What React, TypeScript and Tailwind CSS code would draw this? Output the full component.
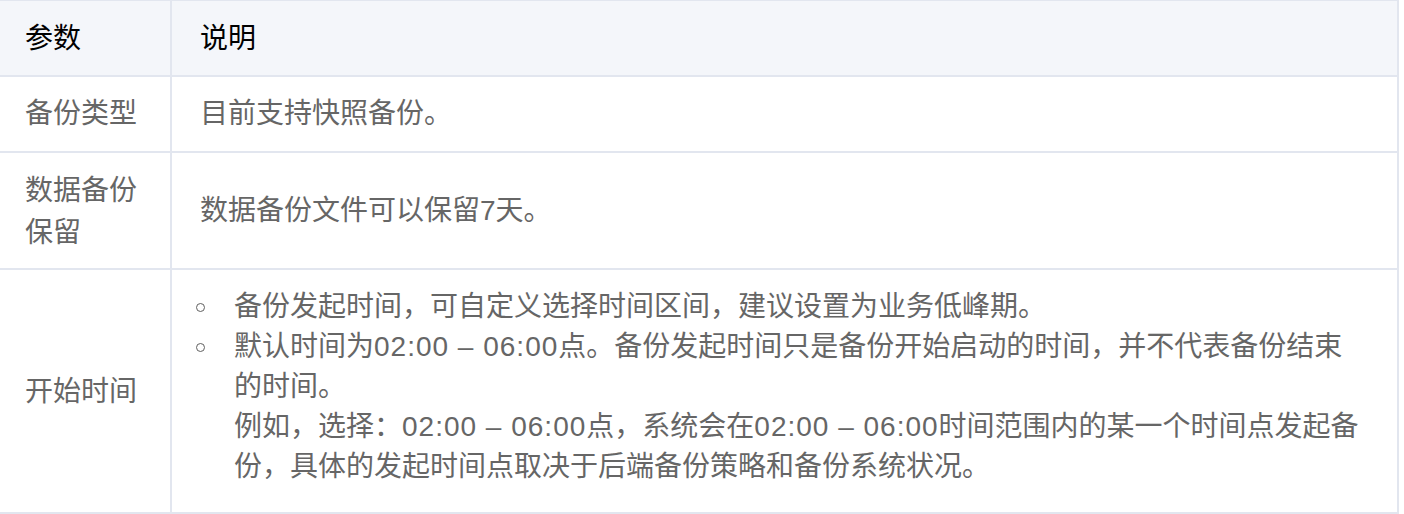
import React from "react";

const Bullet = () => (
  <span className="flex w-[34px] shrink-0 items-center h-[40px]">
    <span className="ml-[-4px] block h-[9px] w-[9px] rounded-full border-[1.5px] border-[#5f5f5f]" />
  </span>
);

const Range = () => <span className="tracking-[1px]">02:00 – 06:00</span>;

export default function App() {
  return (
    <div
      className="w-[1404px] h-[514px] bg-white text-[28px] leading-[40px] text-[#666666]"
      style={{ fontFamily: '"Liberation Sans", "Noto Sans CJK SC", sans-serif' }}
    >
      <div className="w-[1399px] border-t border-r-2 border-b-2 border-[#e2e6ef]">
        {/* header */}
        <div className="grid grid-cols-[172px_1fr] bg-[#f4f6fa] text-black border-b-2 border-[#e2e6ef]">
          <div className="h-[74px] flex items-center pl-[25px] pt-[2px] border-r-2 border-[#e2e6ef]">参数</div>
          <div className="h-[74px] flex items-center pl-[28px] pt-[2px]">说明</div>
        </div>
        {/* row 1 */}
        <div className="grid grid-cols-[172px_1fr] border-b-2 border-[#e2e6ef]">
          <div className="h-[74px] flex items-center pl-[25px] border-r-2 border-[#e2e6ef]">备份类型</div>
          <div className="h-[74px] flex items-center pl-[28px]">目前支持快照备份。</div>
        </div>
        {/* row 2 */}
        <div className="grid grid-cols-[172px_1fr] border-b-2 border-[#e2e6ef]">
          <div className="h-[115px] flex items-center pl-[25px] pr-[20px] pt-[2px] border-r-2 border-[#e2e6ef]">
            <span className="leading-[42px]">数据备份<br />保留</span>
          </div>
          <div className="h-[115px] flex items-center pl-[28px]">数据备份文件可以保留7天。</div>
        </div>
        {/* row 3 */}
        <div className="grid grid-cols-[172px_1fr]">
          <div className="h-[242px] flex items-center pl-[25px] pt-[2px] border-r-2 border-[#e2e6ef]">开始时间</div>
          <div className="h-[242px] pl-[28px] pt-[17px] pb-[25px] whitespace-nowrap">
            <ul>
              <li className="flex">
                <Bullet />
                <span>备份发起时间，可自定义选择时间区间，建议设置为业务低峰期。</span>
              </li>
              <li className="flex">
                <Bullet />
                <span>
                  默认时间为<Range />点。备份发起时间只是备份开始启动的时间，并不代表备份结束
                  <br />
                  的时间。
                  <br />
                  例如，选择：<Range />点，系统会在<Range />时间范围内的某一个时间点发起备
                  <br />
                  份，具体的发起时间点取决于后端备份策略和备份系统状况。
                </span>
              </li>
            </ul>
          </div>
        </div>
      </div>
    </div>
  );
}
